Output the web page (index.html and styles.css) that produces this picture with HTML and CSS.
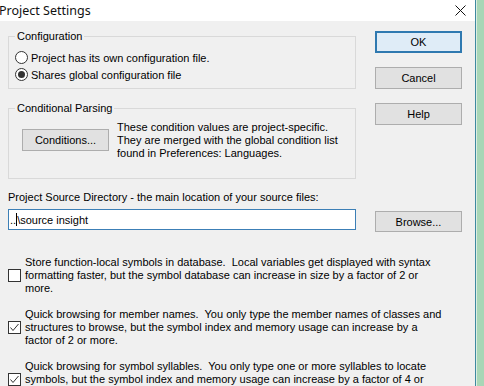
FILE: index.html
```html
<!DOCTYPE html>
<html lang="en">
<head>
    <meta charset="UTF-8">
    <meta name="viewport" content="width=device-width, initial-scale=1.0">
    <title>Project Settings</title>
    <link rel="stylesheet" href="styles.css">
</head>
<body>
    <div class="window">
        <div class="titlebar">
            <span class="title">Project Settings</span>
            <svg class="close" width="11" height="11" viewBox="0 0 11 11">
                <path d="M0.5 0.5 L10.5 10.5 M10.5 0.5 L0.5 10.5" stroke="#111" stroke-width="1" fill="none"/>
            </svg>
        </div>

        <div class="content">
            <div class="top">
                <div class="groups">
                    <fieldset class="group config">
                        <legend>Configuration</legend>
                        <div class="radio-row"><span class="radio"></span>Project has its own configuration file.</div>
                        <div class="radio-row"><span class="radio on"></span>Shares global configuration file</div>
                    </fieldset>

                    <fieldset class="group parsing">
                        <legend>Conditional Parsing</legend>
                        <div class="parsing-body">
                            <button class="btn cond-btn">Conditions...</button>
                            <p class="note">These condition values are project-specific.<br>They are merged with the global condition list<br>found in Preferences: Languages.</p>
                        </div>
                    </fieldset>
                </div>

                <div class="buttons">
                    <button class="btn default">OK</button>
                    <button class="btn">Cancel</button>
                    <button class="btn">Help</button>
                </div>
            </div>

            <div class="source-label">Project Source Directory - the main location of your source files:</div>
            <div class="source-row">
                <div class="path">..<span class="caret"></span>\source insight</div>
                <button class="btn browse">Browse...</button>
            </div>

            <div class="options">
                <div class="opt">
                    <span class="check"></span>
                    <p class="opt-text">Store function-local symbols in database.&nbsp; Local variables get displayed with syntax<br>formatting faster, but the symbol database can increase in size by a factor of 2 or<br>more.</p>
                </div>
                <div class="opt">
                    <span class="check">
                        <svg width="11" height="11" viewBox="0 0 11 11"><polyline points="1.5,5.5 4,8.5 9.5,2" stroke="#333" stroke-width="1" fill="none"/></svg>
                    </span>
                    <p class="opt-text">Quick browsing for member names.&nbsp; You only type the member names of classes and<br>structures to browse, but the symbol index and memory usage can increase by a<br>factor of 2 or more.</p>
                </div>
                <div class="opt">
                    <span class="check">
                        <svg width="11" height="11" viewBox="0 0 11 11"><polyline points="1.5,5.5 4,8.5 9.5,2" stroke="#333" stroke-width="1" fill="none"/></svg>
                    </span>
                    <p class="opt-text">Quick browsing for symbol syllables.&nbsp; You only type one or more syllables to locate<br>symbols, but the symbol index and memory usage can increase by a factor of 4 or<br>more.</p>
                </div>
            </div>
        </div>
    </div>
</body>
</html>
```

FILE: styles.css
```css
* {
    box-sizing: border-box;
}
body {
    margin: 0;
    background-color: #a8d6b6;
    font-family: "Liberation Sans", Arial, sans-serif;
    font-size: 11px;
    color: #000;
}
.window {
    width: 476px;
    height: 386px;
    background-color: #f0f0f0;
    border-right: 1px solid #3f8aa0;
    box-shadow: 1px 0 0 #dceee2;
    overflow: hidden;
}
.titlebar {
    height: 21px;
    background-color: #fff;
    display: flex;
    align-items: center;
    justify-content: space-between;
    padding-right: 9px;
}
.title {
    font-family: "Noto Sans", sans-serif;
    font-size: 12.5px;
    margin-left: -1px;
    color: #111;
}
.content {
    padding: 9px 0 0 8px;
}
.top {
    display: flex;
    align-items: flex-start;
}
.groups {
    width: 348px;
}
.group {
    margin: 0;
    min-width: 0;
    border: 1px solid #d9d9d9;
    padding: 6px 6px 5px;
}
.group legend {
    padding: 0 2px;
    line-height: 13px;
}
.parsing {
    margin-top: 13px;
    padding-bottom: 18px;
}
.radio-row {
    display: flex;
    align-items: center;
    height: 17px;
}
.radio {
    width: 13px;
    height: 13px;
    border: 1px solid #333;
    border-radius: 50%;
    background-color: #fff;
    margin-right: 3px;
    display: flex;
    align-items: center;
    justify-content: center;
}
.radio.on::after {
    content: "";
    width: 7px;
    height: 7px;
    border-radius: 50%;
    background-color: #333;
}
.parsing-body {
    display: flex;
    gap: 8px;
}
.note {
    margin: 0;
    line-height: 13px;
}
.btn {
    font: inherit;
    color: #000;
    height: 22px;
    width: 87px;
    padding: 0;
    border: 1px solid #adadad;
    background-color: #e1e1e1;
    flex: none;
}
.cond-btn {
    margin-left: 7px;
    margin-top: 8px;
}
.btn.default {
    border: 2px solid #2f79b0;
    background-color: #dfecf7;
}
.buttons {
    margin-left: 19px;
    padding-top: 1px;
    display: flex;
    flex-direction: column;
    gap: 14px;
}
.source-label {
    margin-top: 12px;
    line-height: 13px;
}
.source-row {
    display: flex;
    align-items: flex-start;
    margin-top: 5px;
}
.path {
    width: 348px;
    height: 21px;
    border: 1px solid #3c7fb6;
    background-color: #fff;
    padding-left: 1px;
    display: flex;
    align-items: center;
}
.caret {
    width: 1px;
    height: 13px;
    background-color: #000;
}
.browse {
    margin-left: 19px;
    margin-top: 2px;
    height: 21px;
}
.options {
    margin-top: 24px;
}
.opt {
    display: flex;
    align-items: center;
}
.opt + .opt {
    margin-top: 13px;
}
.check {
    width: 13px;
    height: 13px;
    border: 1px solid #333;
    background-color: #fff;
    margin-right: 4px;
    flex: none;
}
.check svg {
    display: block;
}
.opt-text {
    margin: 0;
    line-height: 13px;
    white-space: nowrap;
}
```
